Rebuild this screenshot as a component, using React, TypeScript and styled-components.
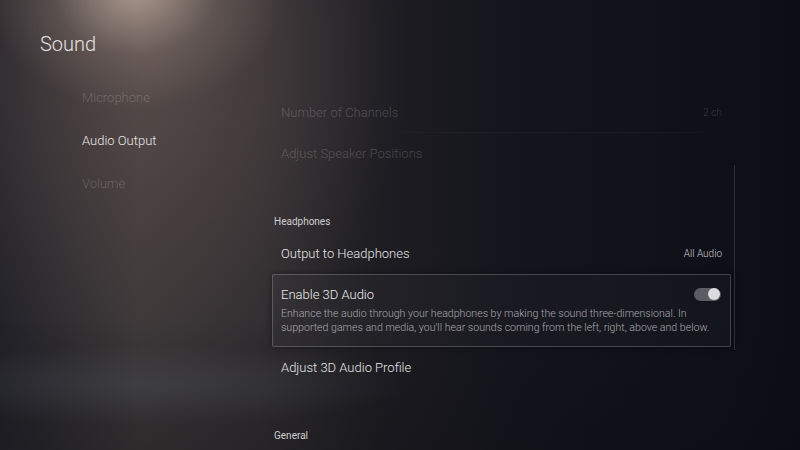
import React from "react";
import styled, { createGlobalStyle } from "styled-components";

const Global = createGlobalStyle`
  html, body { margin: 0; padding: 0; background: #0c0e17; }
  body { font-family: Roboto, "Open Sans", "Liberation Sans", sans-serif; }
  * { box-sizing: border-box; }
`;

const Screen = styled.div`
  position: relative;
  width: 800px;
  height: 450px;
  overflow: hidden;
  display: grid;
  grid-template-columns: 272px 1fr;
  background:
    radial-gradient(ellipse 150px 120px at 135px -10px, rgba(200,180,165,0.75), rgba(160,140,130,0.25) 55%, rgba(0,0,0,0) 100%),
    radial-gradient(ellipse 260px 320px at 150px 60px, rgba(120,100,95,0.45), rgba(0,0,0,0) 100%),
    radial-gradient(ellipse 260px 40px at 150px 385px, rgba(95,100,110,0.35), rgba(0,0,0,0) 100%),
    linear-gradient(90deg, #222228 0px, #3a3637 140px, #302d30 260px, #1d1d22 380px, #14151c 520px, #0c0e17 800px);
`;

const Beam = styled.div`
  position: absolute;
  inset: 0;
  pointer-events: none;
  background: linear-gradient(180deg, rgba(0,0,0,0) 0%, rgba(0,0,0,0) 70%, rgba(10,10,14,0.25) 100%);
`;

const Side = styled.nav`
  position: relative;
  padding: 31px 0 0 40px;
  display: flex;
  flex-direction: column;
`;

const Title = styled.h1`
  margin: 0 0 19px;
  font-weight: 300;
  font-size: 20px;
  line-height: 26px;
  color: #e4e2e0;
`;

const NavItem = styled.div<{ $active?: boolean }>`
  margin-left: 42px;
  height: 43px;
  display: flex;
  align-items: center;
  font-size: 13px;
  font-weight: 300;
  color: ${(p) => (p.$active ? "#e8e6e4" : "rgba(255,255,255,0.2)")};
`;

const Main = styled.main`
  position: relative;
  padding: 92px 69px 0 0;
  display: flex;
  flex-direction: column;
`;

const Row = styled.div<{ $dim?: boolean; $divider?: boolean; $top?: number }>`
  margin-top: ${(p) => p.$top ?? 0}px;
  height: 41px;
  padding: 0 9px;
  display: flex;
  align-items: center;
  justify-content: space-between;
  font-size: 13px;
  font-weight: 300;
  color: ${(p) => (p.$dim ? "rgba(255,255,255,0.2)" : "#e6e6e6")};
  border-bottom: 1px solid transparent;
  border-image: ${(p) =>
    p.$divider
      ? "linear-gradient(90deg, rgba(255,255,255,0) 25%, rgba(255,255,255,0.04) 40%, rgba(255,255,255,0.04) 90%, rgba(255,255,255,0) 95%) 1"
      : "none"};
`;

const Value = styled.span<{ $dim?: boolean }>`
  font-size: 10px;
  color: ${(p) => (p.$dim ? "rgba(255,255,255,0.18)" : "#c9c9cc")};
`;

const SectionHeader = styled.div<{ $top: number }>`
  margin-top: ${(p) => p.$top}px;
  height: 20px;
  padding-left: 2px;
  display: flex;
  align-items: center;
  font-size: 10px;
  color: #cfcfd2;
`;

const Card = styled.div`
  padding: 11px 9px 11px 8px;
  border: 1px solid rgba(255,255,255,0.2);
  border-radius: 2px;
  background: rgba(255,255,255,0.025);
  box-shadow: 0 0 6px rgba(0,0,0,0.4);
`;

const CardHead = styled.div`
  display: flex;
  align-items: center;
  justify-content: space-between;
  height: 16px;
  font-size: 13px;
  font-weight: 300;
  color: #ececec;
`;

const Desc = styled.p`
  margin: 5px 0 0;
  font-size: 10.6px;
  line-height: 14px;
  color: #a9a9ad;
  font-weight: 300;
`;

const Toggle = styled.div<{ $on?: boolean }>`
  width: 27px;
  height: 13px;
  border-radius: 7px;
  background: #5b5d64;
  display: flex;
  align-items: center;
  justify-content: ${(p) => (p.$on ? "flex-end" : "flex-start")};
  padding: 0 1px;
`;

const Knob = styled.div`
  width: 12px;
  height: 12px;
  border-radius: 50%;
  background: #dcdce0;
`;

const Scrollbar = styled.div`
  position: absolute;
  left: 462px;
  top: 165px;
  width: 1px;
  height: 185px;
  background: rgba(255,255,255,0.13);
`;

export default function App() {
  return (
    <>
      <Global />
      <Screen>
        <Beam />
        <Side>
          <Title>Sound</Title>
          <NavItem>Microphone</NavItem>
          <NavItem $active>Audio Output</NavItem>
          <NavItem>Volume</NavItem>
        </Side>
        <Main>
          <Scrollbar />
          <Row $dim $divider>
            <span>Number of Channels</span>
            <Value $dim>2 ch</Value>
          </Row>
          <Row $dim>
            <span>Adjust Speaker Positions</span>
          </Row>
          <SectionHeader $top={37}>Headphones</SectionHeader>
          <Row $top={2}>
            <span>Output to Headphones</span>
            <Value>All Audio</Value>
          </Row>
          <Card>
            <CardHead>
              <span>Enable 3D Audio</span>
              <Toggle $on>
                <Knob />
              </Toggle>
            </CardHead>
            <Desc>
              Enhance the audio through your headphones by making the sound three-dimensional. In
              supported games and media, you'll hear sounds coming from the left, right, above and below.
            </Desc>
          </Card>
          <Row>
            <span>Adjust 3D Audio Profile</span>
          </Row>
          <SectionHeader $top={37}>General</SectionHeader>
        </Main>
      </Screen>
    </>
  );
}
